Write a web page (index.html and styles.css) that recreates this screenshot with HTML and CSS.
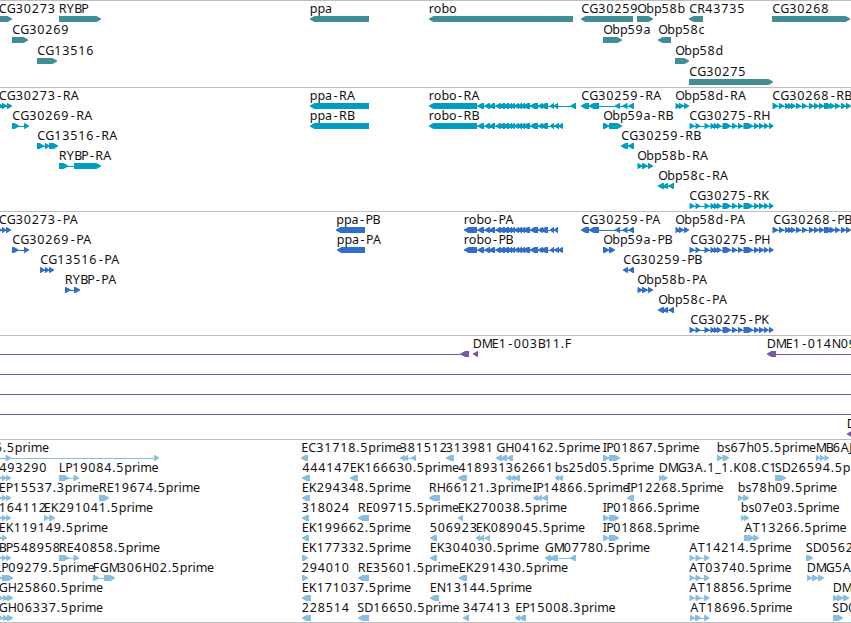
FILE: index.html
```
<!DOCTYPE html>
<html lang="en">
  <head>
    <meta charset="UTF-8" />
    <meta name="viewport" content="width=device-width, initial-scale=1.0" />
    <title>Genome Browser</title>
    <link rel="stylesheet" href="styles.css">
  </head>
  <body>
    <main class="browser">
      <section class="track genes" id="genes"></section>
      <section class="track transcripts" id="transcripts"></section>
      <section class="track proteins" id="proteins"></section>
      <section class="track clones" id="clones"></section>
      <section class="track ests" id="ests"></section>
    </main>
    <script src="tracks.js"></script>
  </body>
</html>
```
FILE: styles.css
```
body {
  margin: 0;
  background-color: white;
  overflow: hidden;
}

.browser {
  display: flex;
  flex-direction: column;
  width: 851px;
  height: 622px;
  border-bottom: 1px solid #bebebe;
}

.track {
  display: flex;
  flex-direction: column;
  box-sizing: border-box;
  border-top: 1px solid #bebebe;
  height: 124px;
}

.genes {
  height: 87px;
  color: #408e94;
}

.transcripts {
  color: #009dbf;
}

.proteins {
  color: #316ecb;
}

.clones {
  height: 104px;
  color: #7459a8;
}

.ests {
  height: 183px;
  color: #88bfdf;
}

.row {
  display: block;
  flex: none;
  width: 851px;
  height: 20px;
  overflow: visible;
}

.genes .row {
  height: 21px;
}

.label {
  fill: #111;
  font-family: "Noto Sans", "Open Sans", sans-serif;
  font-size: 12.5px;
}

.shape {
  fill: currentColor;
}
```
FILE: tracks.js
```
const SVG = 'http://www.w3.org/2000/svg';

const advance = {
  A: 8.5, B: 7, C: 8, D: 9, E: 7, F: 7, G: 9, H: 9, I: 3.5, J: 4, K: 8, L: 6.5,
  M: 10, N: 9, O: 9, P: 7, R: 8, S: 7, T: 7.5, Y: 7.5,
  a: 7, b: 7.6, c: 6.5, d: 7.6, e: 7, h: 7.6, i: 3.3, m: 11.2, o: 7.6, p: 7.6, r: 5, s: 6,
  '.': 4, '-': 7, '_': 6
};

const robo = [[477.5, 484], [484.5, 490], [489, 495], [495.5, 501], [499, 505], [503, 509], [507, 512], [510, 515],
  [514, 519], [517, 522], [520, 525], [523, 530], [530, 538], [538, 543], [541, 548]];
const cg30259 = [[581, 589], [589, 599], [615, 620], [622.5, 627.5], [628.5, 634]];
const cg30275 = [[689.5, 694.5], [695.5, 700], [704.5, 709.5], [710.5, 715], [714, 718], [717, 721], [722.5, 731],
  [732, 737], [738, 742.5], [743.5, 753], [754, 759], [759, 764], [764, 768.5], [769, 773.5]];
const cg30268 = [[772.5, 778], [779, 784], [785, 789], [788, 792], [791, 795.5], [796, 801], [802, 807], [809, 814],
  [814, 819], [819, 824], [824, 832], [830, 835], [835, 840], [841, 846], [846, 851]];
const obp58b = [[637.5, 642.5], [642, 647.5], [648, 653]];
const obp58c = [[658, 664], [663, 668], [668.5, 674]];
const obp58d = [[675.5, 680], [679, 684], [684, 689]];
const at = [[689.5, 694.5], [695.5, 701], [704, 709.5]];
const three = [[-3, 2], [2, 6], [6, 11]];
const across = [[-20, -10], [870, 880]];

// each feature: label, label x, direction, blocks
const tracks = {
  genes: [
    [['CG30273', -1.5, 1, [[-10, 12]]], ['RYBP', 58.5, 1, [[59, 101]]], ['ppa', 309.5, -1, [[310, 369]]],
      ['robo', 428.5, -1, [[429, 573]]], ['CG30259', 581, -1, [[581, 633]]], ['Obp58b', 637, 1, [[637, 653]]],
      ['CR43735', 689, -1, [[689, 703]]], ['CG30268', 772, 1, [[772, 850]]]],
    [['CG30269', 12, 1, [[12, 28]]], ['Obp59a', 603, 1, [[603, 622]]], ['Obp58c', 658, -1, [[658, 671]]]],
    [['CG13516', 37, 1, [[37, 57]]], ['Obp58d', 675, 1, [[675, 689]]]],
    [['CG30275', 689, 1, [[689, 773]]]]
  ],
  transcripts: [
    [['CG30273-RA', -1.5, 1, [[-3, 3], [2, 7], [7, 12]]], ['ppa-RA', 309.5, -1, [[310, 369]]],
      ['robo-RA', 428.5, -1, [[429, 477], ...robo, [550, 554], [554, 558], [570.5, 576]]],
      ['CG30259-RA', 581, -1, cg30259], ['Obp58d-RA', 675, 1, obp58d], ['CG30268-RB', 772, 1, cg30268]],
    [['CG30269-RA', 12, 1, [[12, 19], [24, 29]]], ['ppa-RB', 309.5, -1, [[310, 369]]],
      ['robo-RB', 428.5, -1, [[429, 477], ...robo, [550, 554], [554, 559], [558, 563]]],
      ['Obp59a-RB', 603, 1, [[603, 609], [609, 622]]], ['CG30275-RH', 689, 1, cg30275]],
    [['CG13516-RA', 37, 1, [[37, 44], [45, 49.5], [49, 58]]], ['CG30259-RB', 621, -1, [[621, 628], [628, 634]]]],
    [['RYBP-RA', 58.5, 1, [[59, 68], [74, 101]]], ['Obp58b-RA', 637, 1, obp58b]],
    [['Obp58c-RA', 658, -1, obp58c]],
    [['CG30275-RK', 689, 1, cg30275]]
  ],
  proteins: [
    [['CG30273-PA', -1.5, 1, three], ['ppa-PB', 336, -1, [[336, 365]]],
      ['robo-PA', 463.5, -1, [[464, 477], ...robo, [550, 554], [554, 558]]],
      ['CG30259-PA', 581, -1, cg30259], ['Obp58d-PA', 675, 1, obp58d], ['CG30268-PB', 773, 1, cg30268]],
    [['CG30269-PA', 12, 1, [[12, 18.5], [24, 29]]], ['ppa-PA', 336.5, -1, [[337, 365]]],
      ['robo-PB', 463.5, -1, [[464, 477], ...robo, [550, 554], [554, 559], [558, 563]]],
      ['Obp59a-PB', 603, 1, [[603, 609], [609, 615]]], ['CG30275-PH', 690, 1, cg30275]],
    [['CG13516-PA', 40, 1, [[40, 45], [45, 49], [49, 54]]], ['CG30259-PB', 623, -1, [[623, 628], [628.5, 634]]]],
    [['RYBP-PA', 64.5, 1, [[65, 70.5], [74, 80]]], ['Obp58b-PA', 637, 1, obp58b]],
    [['Obp58c-PA', 658, -1, obp58c]],
    [['CG30275-PK', 690, 1, cg30275]]
  ],
  clones: [
    [['', 0, -1, [[-20, -10], [460.5, 469]]], ['DME1-003B11.F', 472.5, -1, [[473, 478]]],
      ['DME1-014N09', 766.5, -1, [[767, 776], [870, 880]]]],
    [['', 0, -1, across]],
    [['', 0, -1, across]],
    [['', 0, -1, across]],
    [['D', 846.5, -1, [[847, 856]]]]
  ],
  ests: [
    [['5.5prime', -5.5, 1, [[-8, -2], [5.5, 11], [154, 159]]], ['EC31718.5prime', 301, -1, [[301, 308]]],
      ['381512', 399.5, -1, [[400, 405], [404, 408], [411, 416]]], ['313981', 445.5, -1, [[446, 454]]],
      ['GH04162.5prime', 496, -1, [[496, 502], [501, 507], [507, 513]]],
      ['IP01867.5prime', 602.5, 1, [[603, 609], [609, 620]]], ['bs67h05.5prime', 716.5, 1, [[717, 722.5], [722.5, 729]]],
      ['MB6AJ', 815.5, 1, [[816, 820.5], [820, 824.5], [824.5, 829]]]],
    [['493290', -1, 1, three], ['LP19084.5prime', 58.5, 1, [[59, 69], [73.5, 79]]], ['444147', 302, -1, [[302, 310]]],
      ['EK166630.5prime', 349.5, -1, [[350, 358]]], ['418931', 458, -1, [[458, 467]]],
      ['362661', 505.5, -1, [[506, 511], [510, 515], [514, 520]]], ['bs25d05.5prime', 554.5, -1, [[555, 559], [558, 563]]],
      ['DMG3A.1_1.K08.C1', 658.5, 1, [[659, 663], [662, 667.5]]], ['SD26594.5p', 774.5, 1, [[775, 786]]]],
    [['EP15537.3prime', -1.5, 1, three], ['RE19674.5prime', 98.5, 1, [[99, 109]]], ['EK294348.5prime', 301.5, -1, [[302, 310]]],
      ['RH66121.3prime', 428.5, -1, [[429, 440]]], ['IP14866.5prime', 532.5, -1, [[533, 538], [537, 542], [542, 548]]],
      ['IP12268.5prime', 626.5, -1, [[627, 634]]], ['bs78h09.5prime', 737.5, 1, [[738, 743], [743, 749]]]],
    [['164112', -1.5, 1, three], ['EK291041.5prime', 43.5, 1, [[44, 49], [49, 55]]], ['318024', 301.5, -1, [[302, 309]]],
      ['RE09715.5prime', 357.5, -1, [[358, 369]]], ['EK270038.5prime', 457.5, -1, [[458, 463]]],
      ['IP01866.5prime', 602.5, 1, [[603, 609], [609, 619]]], ['bs07e03.5prime', 740.5, 1, [[741, 745], [744, 749]]]],
    [['EK119149.5prime', -1.5, 1, [[-3, 2], [2, 7]]], ['EK199662.5prime', 301.5, -1, [[302, 309]]],
      ['506923', 429.5, -1, [[430, 437]]], ['EK089045.5prime', 475.5, -1, [[476, 480], [479, 484], [485, 490]]],
      ['IP01868.5prime', 602.5, 1, [[603, 609], [609, 619]]], ['AT13266.5prime', 744, 1, [[744, 754], [753, 759]]]],
    [['BP548958', -1.5, 1, three], ['RE40858.5prime', 58.5, 1, [[59, 69], [73.5, 79]]], ['EK177332.5prime', 301.5, 1, [[302, 308]]],
      ['EK304030.5prime', 429.5, -1, [[430, 437]]], ['GM07780.5prime', 544.5, -1, [[545, 551], [550, 558], [570, 576]]],
      ['AT14214.5prime', 689, 1, at], ['SD0562', 805.5, 1, [[806, 813]]]],
    [['LP09279.5prime', -5.5, 1, [[-3, 2], [2, 13]]], ['FGM306H02.5prime', 92.5, 1, [[93, 99], [104, 115]]],
      ['294010', 301.5, 1, [[302, 308]]], ['RE35601.5prime', 357.5, -1, [[358, 369]]],
      ['EK291430.5prime', 458.5, -1, [[459, 467]]], ['AT03740.5prime', 689, 1, at],
      ['DMG5A', 806.5, 1, [[807, 812], [812, 818], [818, 824]]]],
    [['GH25860.5prime', -1.5, 1, [[-3, 3], [3, 8], [7, 13]]], ['EK171037.5prime', 301.5, -1, [[302, 311]]],
      ['EN13144.5prime', 429.5, -1, [[430, 439]]], ['AT18856.5prime', 689, 1, at],
      ['DM', 832.5, 1, [[833, 838], [837, 843], [843, 849]]]],
    [['GH06337.5prime', -1.5, 1, [[-3, 3], [3, 8], [7, 13]]], ['228514', 301.5, -1, [[302, 311]]],
      ['SD16650.5prime', 357, -1, [[358, 369]]], ['347413', 462.5, -1, [[463, 469]]],
      ['EP15008.3prime', 515, -1, [[515, 520], [519, 526]]], ['AT18696.5prime', 690, 1, [[690, 695], [695, 701], [704, 709.5]]],
      ['SD0', 832, 1, [[833, 843]]]]
  ]
};

function add(parent, name, attributes) {
  const node = document.createElementNS(SVG, name);
  for (const key in attributes) node.setAttribute(key, attributes[key]);
  parent.appendChild(node);
  return node;
}

// a block that ends in a point on the side it is read towards
function block(from, to, direction) {
  const head = Math.min(5, to - from) - 0.5;
  if (direction > 0) {
    return `M${from} 15H${to - head}L${to} 17.5V18.5L${to - head} 21H${from}Z`;
  }
  return `M${to} 15H${from + head}L${from} 17.5V18.5L${from + head} 21H${to}Z`;
}

for (const id in tracks) {
  const track = document.getElementById(id);
  tracks[id].forEach((features) => {
    const row = add(track, 'svg', { class: 'row' });
    features.forEach(([name, x, direction, blocks]) => {
      if (blocks.length > 1) {
        const start = blocks[0][0];
        const end = blocks[blocks.length - 1][1];
        add(row, 'rect', { class: 'shape', x: start + 1, y: 18, width: end - start - 2, height: 1 });
      }
      add(row, 'path', { class: 'shape', d: blocks.map(([a, b]) => block(a, b, direction)).join('') });
      if (name) {
        let pen = x + 0.3;
        const places = [...name].map((letter) => {
          // the hyphen is narrow, so it goes to the middle of its cell
          const place = letter === '-' ? pen + 1.5 : pen;
          pen += advance[letter] || 8;
          return place.toFixed(1);
        });
        add(row, 'text', { class: 'label', x: places.join(' '), y: 12 }).textContent = name;
      }
    });
  });
}
```
